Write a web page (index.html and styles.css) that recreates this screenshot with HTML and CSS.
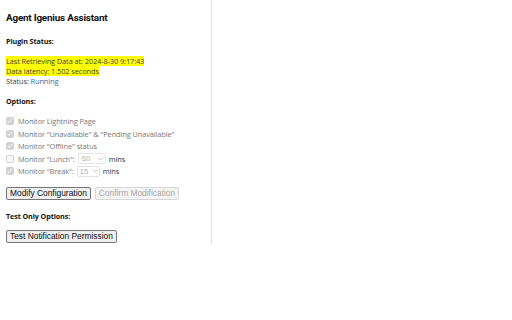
FILE: index.html
```html
<!DOCTYPE html>
<html>
<head>
<meta charset="utf-8">
<link rel="stylesheet" href="styles.css">
</head>
<body>
<div class="panel">
  <h1 class="title">Agent Igenius Assistant</h1>
  <h2 class="section">Plugin Status:</h2>
  <div class="status">
    <div><span class="hl">Last Retrieving Data at: 2024-8-30 9:17:43</span></div>
    <div><span class="hl">Data latency: 1.502 seconds</span></div>
    <div>Status: <span class="running">Running</span></div>
  </div>
  <h2 class="section">Options:</h2>
  <div class="options">
    <label class="opt"><input type="checkbox" checked disabled><span class="dis">Monitor Lightning Page</span></label>
    <label class="opt"><input type="checkbox" checked disabled><span class="dis">Monitor "Unavailable" &amp; "Pending Unavailable"</span></label>
    <label class="opt"><input type="checkbox" checked disabled><span class="dis">Monitor "Offline" status</span></label>
    <label class="opt"><input type="checkbox" disabled><span class="dis">Monitor "Lunch":</span><span class="sel sel60"><span>60</span><svg class="chev" viewBox="0 0 8 5" width="7" height="4"><path d="M0.8 0.8 L4 4 L7.2 0.8" fill="none" stroke="#b5b5b5" stroke-width="1"/></svg></span><span class="mins">mins</span></label>
    <label class="opt"><input type="checkbox" checked disabled><span class="dis">Monitor "Break":</span><span class="sel sel15"><span>15</span><svg class="chev" viewBox="0 0 8 5" width="6" height="4"><path d="M0.8 0.8 L4 4 L7.2 0.8" fill="none" stroke="#b5b5b5" stroke-width="1"/></svg></span><span class="mins">mins</span></label>
  </div>
  <div class="buttons">
    <button class="btn">Modify Configuration</button>
    <button class="btn" disabled>Confirm Modification</button>
  </div>
  <h2 class="section test">Test Only Options:</h2>
  <div class="buttons buttons-test">
    <button class="btn">Test Notification Permission</button>
  </div>
</div>
</body>
</html>
```
FILE: styles.css
```css
html, body {
  margin: 0;
  padding: 0;
  background: #fff;
}
.panel {
  box-sizing: border-box;
  width: 212px;
  height: 244px;
  padding: 0 0 0 6px;
  border-right: 1px solid #e3e3e3;
  font-family: "Open Sans", "Noto Sans", sans-serif;
  font-size: 7.4px;
  letter-spacing: -0.1px;
  color: #444;
}
.title {
  margin: 0;
  padding-top: 10px;
  font-family: Roboto, "Open Sans", sans-serif;
  font-size: 9.9px;
  letter-spacing: -0.2px;
  font-weight: 700;
  color: #111;
  line-height: 16px;
}
.section {
  margin: 10px 0 0 0;
  font-size: 7.2px;
  letter-spacing: -0.1px;
  font-weight: 700;
  color: #111;
  line-height: 10px;
}
.status {
  margin-top: 10px;
  line-height: 10px;
}
.hl {
  background: #ffff00;
  color: #444;
}
.running {
  color: #2f6fa8;
}
.options {
  margin-top: 10px;
  display: flex;
  flex-direction: column;
  gap: 2px;
}
.opt {
  display: flex;
  align-items: center;
  height: 10.5px;
}
.opt input {
  width: 8px;
  height: 8px;
  margin: 0 4px 0 0;
}
.dis {
  color: #777;
}
.sel {
  box-sizing: border-box;
  display: inline-flex;
  align-items: center;
  justify-content: space-between;
  font-family: "Liberation Sans", Arial, sans-serif;
  letter-spacing: 0;
  font-size: 7.6px;
  height: 11px;
  padding: 0 1px 0 2px;
  margin: 0 3px 0 3px;
  border: 1px solid #e3e3e3;
  border-radius: 2px;
  color: #b0b0b0;
  background: #fff;
}
.sel60 { width: 28px; padding-left: 3px; }
.sel15 { width: 23px; }
.mins {
  color: #333;
}
.buttons {
  margin-top: 10px;
  display: flex;
  gap: 4px;
}
.buttons-test {
  margin-top: 9px;
}
.btn {
  font-family: "Liberation Sans", Arial, sans-serif;
  letter-spacing: 0;
  font-size: 8.4px;
  height: 13px;
  padding: 0 3px;
  border: 1px solid #767676;
  border-radius: 2px;
  background: #efefef;
  color: #111;
  line-height: 11px;
}
.btn:disabled {
  border-color: #d6d6d6;
  background: #f4f4f4;
  color: #a9a9a9;
}
.test {
  margin-top: 11px;
}
```
